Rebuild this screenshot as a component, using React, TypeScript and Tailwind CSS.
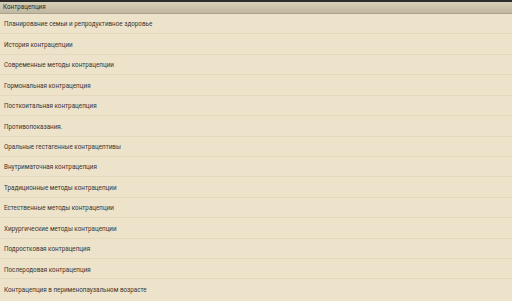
import React from "react";

const items = [
  "Планирование семьи и репродуктивное здоровье",
  "История контрацепции",
  "Современные методы контрацепции",
  "Гормональная контрацепция",
  "Посткоитальная контрацепция",
  "Противопоказания.",
  "Оральные гестагенные контрацептивы",
  "Внутриматочная контрацепция",
  "Традиционные методы контрацепции",
  "Естественные методы контрацепции",
  "Хирургические методы контрацепции",
  "Подростковая контрацепция",
  "Послеродовая контрацепция",
  "Контрацепция в перименопаузальном возрасте",
];

export default function App() {
  return (
    <div className="w-[512px] h-[301px] bg-[#ede2ca] flex flex-col overflow-hidden font-['Roboto',sans-serif] text-[6.3px] text-[#3a3631]">
      <div className="h-[2px] bg-[#2b2b2b]" />
      <div className="h-[12px] flex items-center px-[3px] pt-[1px] bg-gradient-to-b from-[#d6ceb6] to-[#bfb79f] border-b border-[#a9a18b] text-[#2e2a24]">
        Контрацепция
      </div>
      <div className="flex-1 flex flex-col pb-[2px]">
        {items.map((item, i) => (
          <div
            key={i}
            className={
              "flex-1 flex items-center px-[4px] pt-[3px] " +
              (i < items.length - 1 ? "border-b border-[#e4d8bf]" : "")
            }
          >
            {item}
          </div>
        ))}
      </div>
    </div>
  );
}
